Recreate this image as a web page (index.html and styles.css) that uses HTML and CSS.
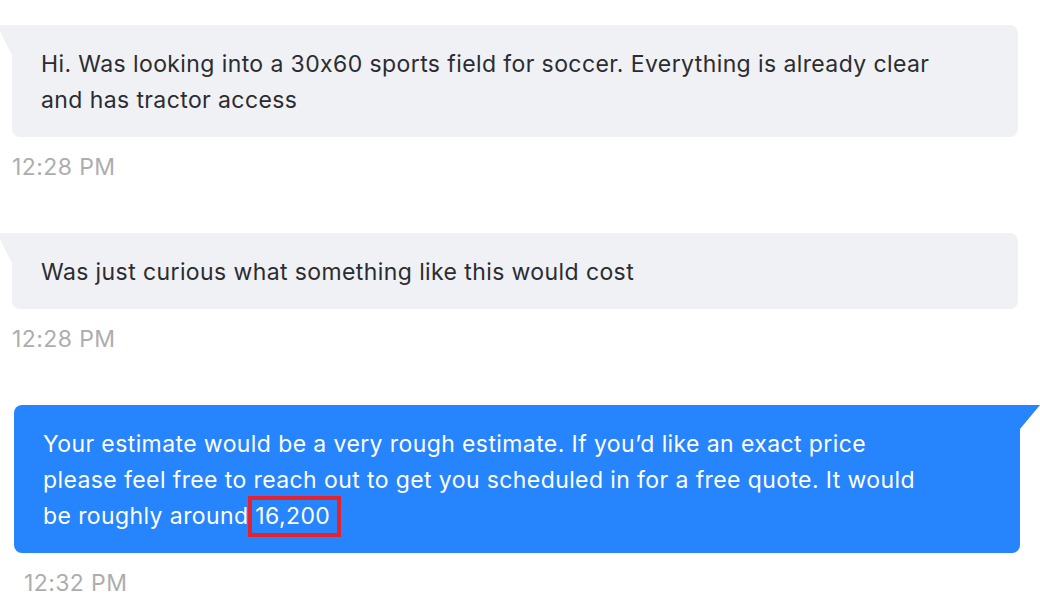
FILE: index.html
```html
<!DOCTYPE html>
<html>
<head>
<meta charset="utf-8">
<link rel="stylesheet" href="styles.css">
</head>
<body>
<div class="thread">
  <div class="msg in">
    <div class="bubble">Hi. Was looking into a 30x60 sports field for soccer. Everything is already clear<br>and has tractor access</div>
    <div class="time">12:28 PM</div>
  </div>
  <div class="msg in">
    <div class="bubble">Was just curious what something like this would cost</div>
    <div class="time">12:28 PM</div>
  </div>
  <div class="msg out">
    <div class="bubble">Your estimate would be a very rough estimate. If you’d like an exact price<br>please feel free to reach out to get you scheduled in for a free quote. It would<br>be roughly around <span class="hl">16,200</span></div>
    <div class="time">12:32 PM</div>
  </div>
</div>
</body>
</html>
```
FILE: styles.css
```css
html, body {
  margin: 0;
  padding: 0;
  background: #ffffff;
}
body {
  font-family: "Inter", "Noto Sans", sans-serif;
  font-size: 23px;
  letter-spacing: 0.4px;
  font-feature-settings: "calt" 0;
  color: #2c2c30;
}
.thread {
  display: flex;
  flex-direction: column;
  padding-top: 25px;
}
.msg {
  display: flex;
  flex-direction: column;
  margin-bottom: 54px;
}
.msg:last-child { margin-bottom: 0; }
.bubble {
  position: relative;
  line-height: 36px;
  padding: 21px 29px 19px 29px;
  white-space: nowrap;
}
.in .bubble {
  margin: 0 22px 0 12px;
  background: #eff1f5;
  border-radius: 0 8px 8px 8px;
}
.in .bubble::before {
  content: "";
  position: absolute;
  left: -12px;
  top: 0;
  width: 12px;
  height: 30px;
  background: #eff1f5;
  clip-path: polygon(0 0, 100% 0, 100% 100%, 10% 30%, 0 20%);
}
.out .bubble {
  margin: 0 20px 0 14px;
  background: #2684fc;
  color: #ffffff;
  border-radius: 8px 0 8px 8px;
}
.out .bubble::after {
  content: "";
  position: absolute;
  right: -20px;
  top: 0;
  width: 20px;
  height: 24px;
  background: #2684fc;
  clip-path: polygon(0 0, 100% 0, 0 100%);
}
.time {
  color: #adadaf;
  line-height: 24px;
  padding-top: 18px;
  margin-left: 12px;
}
.out .time { margin-left: 24px; }
.hl {
  position: relative;
}
.hl::after {
  content: "";
  position: absolute;
  left: -7px;
  right: -11px;
  top: -6px;
  bottom: -7px;
  border: 4px solid #e8222c;
}
```
